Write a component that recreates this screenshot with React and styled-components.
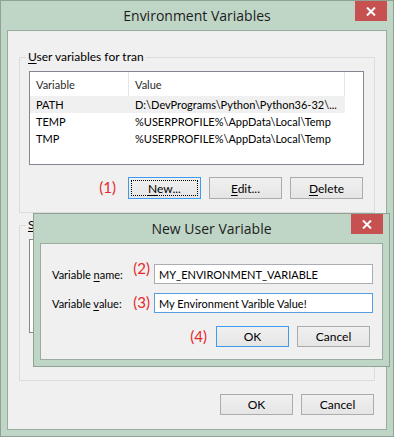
import React from "react";
import styled, { createGlobalStyle } from "styled-components";

const GlobalStyle = createGlobalStyle`
  body {
    margin: 0;
    background: #ffffff;
    font-family: Lato, "Noto Sans", sans-serif;
    font-size: 11px;
    color: #000;
  }
`;

const Frame = styled.div`
  position: ${(p) => (p.$dialog ? "absolute" : "relative")};
  left: ${(p) => (p.$dialog ? "32px" : "auto")};
  top: ${(p) => (p.$dialog ? "212px" : "auto")};
  width: ${(p) => (p.$dialog ? "357px" : "394px")};
  height: ${(p) => (p.$dialog ? "154px" : "437px")};
  box-sizing: border-box;
  border: 1px solid #8fa294;
  background: #bfd6c7;
  padding: 0 6px 6px;
  display: flex;
  flex-direction: column;
`;

const TitleBar = styled.div`
  height: 29px;
  display: grid;
  grid-template-columns: 1fr auto 1fr;
  align-items: start;
`;

const Title = styled.div`
  grid-column: 2;
  font-family: "Open Sans", "Noto Sans", sans-serif;
  font-size: 14px;
  line-height: 29px;
  color: #1c1c1c;
  white-space: nowrap;
`;

const CloseButton = styled.div`
  grid-column: 3;
  justify-self: end;
  width: 32px;
  height: 20px;
  background: #c75050;
  display: flex;
  align-items: center;
  justify-content: center;
`;

const Client = styled.div`
  flex: 1;
  background: #f0f0f0;
  border: 1px solid #9aab9f;
  display: flex;
  flex-direction: column;
  padding: ${(p) => p.$pad};
`;

const Group = styled.fieldset`
  margin: 0 0 ${(p) => p.$after || 0}px;
  border: 1px solid #dcdcdc;
  padding: 6px 10px 13px 9px;
  display: flex;
  flex-direction: column;
`;

const Legend = styled.legend`
  padding: 0 2px;
  margin-left: -3px;
  line-height: 16px;
  font-size: 12px;
`;

const ListView = styled.div`
  height: 94px;
  box-sizing: border-box;
  border: 1px solid #828790;
  background: #fff;
  overflow: hidden;
`;

const Row = styled.div`
  display: grid;
  grid-template-columns: 99px 216px;
  height: ${(p) => (p.$header ? "24px" : "17px")};
  align-items: center;
  background: ${(p) => (p.$hover ? "#f0f0f0" : "transparent")};
  width: 315px;
`;

const Cell = styled.div`
  padding-left: 6px;
  height: 100%;
  display: flex;
  align-items: center;
  white-space: nowrap;
  overflow: hidden;
  box-sizing: border-box;
  border-right: ${(p) => (p.$header ? "1px solid #e5e5e5" : "none")};
  color: ${(p) => (p.$header ? "#2b2b2b" : "#000")};
`;

const ButtonRow = styled.div`
  display: flex;
  justify-content: flex-end;
  align-items: center;
  gap: 8px;
  margin-top: ${(p) => p.$top || 0}px;
  padding-right: ${(p) => p.$right || 0}px;
`;

const Button = styled.div`
  width: 73px;
  height: ${(p) => p.$h || 22}px;
  box-sizing: border-box;
  border: 1px solid ${(p) => (p.$default ? "#3c9cf0" : "#acacac")};
  background: linear-gradient(#f0f0f0, #e5e5e5);
  display: flex;
  align-items: center;
  justify-content: center;
  font-size: 12px;
  outline: ${(p) => (p.$focus ? "1px dotted #000" : "none")};
  outline-offset: -4px;
`;

const Key = styled.span`
  text-decoration: underline;
  text-underline-offset: 2px;
`;

const Note = styled.span`
  color: #e5282d;
  font-size: 15px;
  line-height: 16px;
  margin-right: ${(p) => p.$gap || 0}px;
  align-self: ${(p) => (p.$raise ? "flex-start" : "center")};
  margin-top: ${(p) => (p.$raise ? "-4px" : "-2px")};
`;

const Form = styled.div`
  display: grid;
  grid-template-columns: 102px 219px;
  row-gap: 9px;
`;

const FieldLabel = styled.div`
  display: flex;
  justify-content: space-between;
  align-items: center;
  padding-right: 4px;
  white-space: nowrap;
`;

const TextBox = styled.input`
  height: 20px;
  box-sizing: border-box;
  border: 1px solid ${(p) => (p.$active ? "#569de5" : "#abadb3")};
  background: #fff;
  padding: 0 4px;
  margin: 0;
  font: inherit;
  color: #000;
  outline: none;
`;

const CloseIcon = () => (
  <svg width="10" height="9" viewBox="0 0 10 9">
    <path d="M1 0.5 L9 8.5 M9 0.5 L1 8.5" stroke="#fff" strokeWidth="2" />
  </svg>
);

const userVars = [
  ["PATH", "D:\\DevPrograms\\Python\\Python36-32\\..."],
  ["TEMP", "%USERPROFILE%\\AppData\\Local\\Temp"],
  ["TMP", "%USERPROFILE%\\AppData\\Local\\Temp"],
];

// the system list sits behind the dialog, so it is drawn without content
const VarList = ({ rows, bare }) => (
  <ListView>
    {!bare && (
      <Row $header>
        <Cell $header>Variable</Cell>
        <Cell $header>Value</Cell>
      </Row>
    )}
    {rows.map(([name, value], i) => (
      <Row key={name} $hover={i === 0}>
        <Cell>{name}</Cell>
        <Cell>{value}</Cell>
      </Row>
    ))}
  </ListView>
);

export default function App() {
  return (
    <>
      <GlobalStyle />
      <Frame>
        <TitleBar>
          <Title>Environment Variables</Title>
          <CloseButton>
            <CloseIcon />
          </CloseButton>
        </TitleBar>
        <Client $pad="18px 11px 0">
          <Group $after={4}>
            <Legend>
              <Key>U</Key>ser variables for tran
            </Legend>
            <VarList rows={userVars} />
            <ButtonRow $top={12} $right={1}>
              <Note $gap={4}>(1)</Note>
              <Button $default $focus>
                <span>
                  <Key>N</Key>ew...
                </span>
              </Button>
              <Button>
                <span>
                  <Key>E</Key>dit...
                </span>
              </Button>
              <Button>
                <span>
                  <Key>D</Key>elete
                </span>
              </Button>
            </ButtonRow>
          </Group>
          <Group $after={13}>
            <Legend>
              <Key>S</Key>
            </Legend>
            <VarList rows={[]} bare />
            <ButtonRow $top={12} $right={1}>
              <Button />
              <Button />
              <Button />
            </ButtonRow>
          </Group>
          <ButtonRow $right={1}>
            <Button $h={21}>OK</Button>
            <Button $h={21}>Cancel</Button>
          </ButtonRow>
        </Client>

        <Frame $dialog>
          <TitleBar>
            <Title>New User Variable</Title>
            <CloseButton>
              <CloseIcon />
            </CloseButton>
          </TitleBar>
          <Client $pad="20px 9px 0 11px">
            <Form>
              <FieldLabel>
                <span>
                  Variable <Key>n</Key>ame:
                </span>
                <Note $raise>(2)</Note>
              </FieldLabel>
              <TextBox readOnly value="MY_ENVIRONMENT_VARIABLE" />
              <FieldLabel>
                <span>
                  Variable <Key>v</Key>alue:
                </span>
                <Note>(3)</Note>
              </FieldLabel>
              <TextBox $active readOnly value="My Environment Varible Value!" />
            </Form>
            <ButtonRow $top={13} $right={3}>
              <Note $gap={1}>(4)</Note>
              <Button $default $h={21}>
                OK
              </Button>
              <Button $h={21}>Cancel</Button>
            </ButtonRow>
          </Client>
        </Frame>
      </Frame>
    </>
  );
}
